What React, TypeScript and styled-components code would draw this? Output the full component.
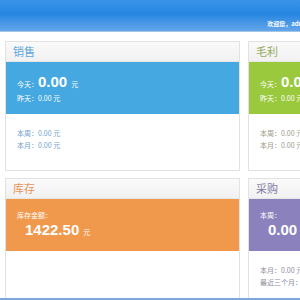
import React from 'react'
import styled, { createGlobalStyle } from 'styled-components'

const GlobalStyle = createGlobalStyle`
  html, body {
    margin: 0;
    padding: 0;
    background: #ffffff;
    overflow: hidden;
  }
  body {
    font-family: "Noto Sans CJK SC", "Liberation Sans", sans-serif;
  }
`

const Page = styled.div`
  width: 300px;
  height: 300px;
  overflow: hidden;
`

const TopBar = styled.header`
  height: 32px;
  border-bottom: 1px solid #a6c3e6;
  background: linear-gradient(#3a94e8 0%, #2686e2 45%, #4f9ae6 80%, #62a6ea 100%);
  display: flex;
  justify-content: flex-end;
  align-items: flex-end;
  padding-bottom: 3px;
  box-sizing: border-box;
`

const Welcome = styled.div`
  color: #ffffff;
  font-size: 6px;
  font-weight: bold;
  white-space: nowrap;
  margin-right: -10px;
  line-height: 8px;
`

const Board = styled.main`
  display: grid;
  grid-template-columns: repeat(4, 235px);
  column-gap: 8px;
  row-gap: 7px;
  padding: 9px 0 0 5px;
`

const Card = styled.section`
  border: 1px solid #e2e2e2;
  background: #ffffff;
  display: flex;
  flex-direction: column;
`

const CardTitle = styled.div<{ $tone: string }>`
  height: 19px;
  background: linear-gradient(#fafafa, #f1f1f1);
  border-bottom: 1px solid #e6e6e6;
  padding-left: 7px;
  color: ${p => p.$tone};
  font-size: 11px;
  line-height: 19px;
`

const Panel = styled.div<{ $bg: string }>`
  height: 52px;
  background: ${p => p.$bg};
  color: #ffffff;
  padding: 0 11px;
  display: flex;
  flex-direction: column;
  justify-content: center;
`

const Line = styled.div`
  font-size: 7px;
  line-height: 11px;
  white-space: nowrap;
`

const BigLine = styled.div<{ $indent?: boolean }>`
  display: flex;
  align-items: baseline;
  white-space: nowrap;
  font-size: 7px;
  line-height: 18px;
  padding-left: ${p => (p.$indent ? '8px' : '0')};
`

const Amount = styled.span`
  font-family: "Liberation Sans", Arial, sans-serif;
  font-weight: bold;
  font-size: 15px;
  margin-right: 4px;
`

const Details = styled.div<{ $tone: string }>`
  padding: 13px 11px 19px;
  color: ${p => p.$tone};
  font-size: 7px;
  line-height: 12px;
  white-space: nowrap;
  flex: 1;
`

const Footer = styled.div`
  position: fixed;
  left: 0;
  right: 0;
  bottom: 0;
  height: 2px;
  background: #7ca6dc;
`

export default function App() {
  return (
    <Page>
      <GlobalStyle />
      <TopBar>
        <Welcome>欢迎您，admin</Welcome>
      </TopBar>
      <Board>
        <Card>
          <CardTitle $tone="#5aa6da">销售</CardTitle>
          <Panel $bg="#45a8e1">
            <BigLine>今天：<Amount>0.00</Amount>元</BigLine>
            <Line>昨天：0.00 元</Line>
          </Panel>
          <Details $tone="#70a2cc">
            <div>本周：0.00 元</div>
            <div>本月：0.00 元</div>
          </Details>
        </Card>
        <Card>
          <CardTitle $tone="#94ab62">毛利</CardTitle>
          <Panel $bg="#9bc93d">
            <BigLine>今天：<Amount>0.00</Amount>元</BigLine>
            <Line>昨天：0.00 元</Line>
          </Panel>
          <Details $tone="#9a9a86">
            <div>本周：0.00 元</div>
            <div>本月：0.00 元</div>
          </Details>
        </Card>
        <Card />
        <Card />
        <Card>
          <CardTitle $tone="#e2955a">库存</CardTitle>
          <Panel $bg="#f0984b">
            <Line>库存金额：</Line>
            <BigLine $indent>
              <Amount>1422.50</Amount>元
            </BigLine>
          </Panel>
          <Details $tone="#999999" />
        </Card>
        <Card>
          <CardTitle $tone="#827ca6">采购</CardTitle>
          <Panel $bg="#8b82bd">
            <Line>本周：</Line>
            <BigLine $indent>
              <Amount>0.00</Amount>元
            </BigLine>
          </Panel>
          <Details $tone="#8e8c9c">
            <div>本月：0.00 元</div>
            <div>最近三个月：0.00 元</div>
          </Details>
        </Card>
      </Board>
      <Footer />
    </Page>
  )
}
